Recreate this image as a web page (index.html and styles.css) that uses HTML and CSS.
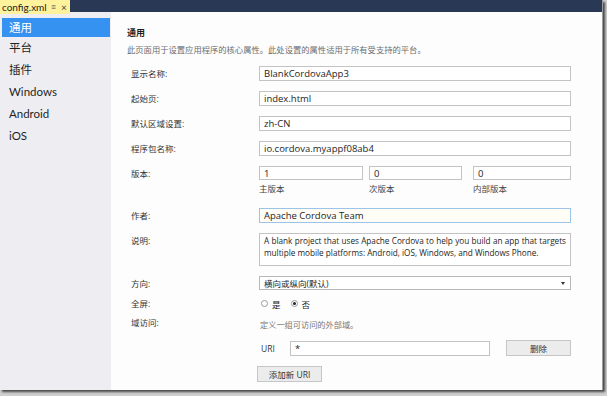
FILE: index.html
```html
<!DOCTYPE html>
<html lang="zh">
<head>
    <meta charset="UTF-8">
    <title>config.xml</title>
    <link rel="stylesheet" href="styles.css">
</head>
<body>
    <div class="window">
        <div class="tabbar">
            <div class="tab">
                <span class="tab-name">config.xml</span>
                <span class="tab-pin">≡</span>
                <span class="tab-close">×</span>
            </div>
        </div>

        <div class="body">
            <ul class="sidebar">
                <li class="active">通用</li>
                <li>平台</li>
                <li>插件</li>
                <li>Windows</li>
                <li>Android</li>
                <li>iOS</li>
            </ul>

            <div class="main">
                <h2>通用</h2>
                <p class="description">此页面用于设置应用程序的核心属性。此处设置的属性适用于所有受支持的平台。</p>

                <div class="form">
                    <div class="row">
                        <label>显示名称:</label>
                        <input type="text" class="field" value="BlankCordovaApp3">
                    </div>
                    <div class="row">
                        <label>起始页:</label>
                        <input type="text" class="field" value="index.html">
                    </div>
                    <div class="row">
                        <label>默认区域设置:</label>
                        <input type="text" class="field" value="zh-CN">
                    </div>
                    <div class="row">
                        <label>程序包名称:</label>
                        <input type="text" class="field" value="io.cordova.myappf08ab4">
                    </div>
                    <div class="row row-version">
                        <label>版本:</label>
                        <div class="version">
                            <div class="version-part major">
                                <input type="text" class="field" value="1">
                                <span>主版本</span>
                            </div>
                            <div class="version-part minor">
                                <input type="text" class="field" value="0">
                                <span>次版本</span>
                            </div>
                            <div class="version-part build">
                                <input type="text" class="field" value="0">
                                <span>内部版本</span>
                            </div>
                        </div>
                    </div>
                    <div class="row">
                        <label>作者:</label>
                        <input type="text" class="field focused" value="Apache Cordova Team">
                    </div>
                    <div class="row">
                        <label>说明:</label>
                        <div class="field textarea">A blank project that uses Apache Cordova to help you build an app that targets multiple mobile platforms: Android, iOS, Windows, and Windows Phone.</div>
                    </div>
                    <div class="row row-select">
                        <label>方向:</label>
                        <div class="field select">
                            <span>横向或纵向(默认)</span>
                            <span class="arrow"></span>
                        </div>
                    </div>
                    <div class="row row-radio">
                        <label>全屏:</label>
                        <div class="radios">
                            <span class="radio"></span><span class="radio-text">是</span>
                            <span class="radio checked"></span><span class="radio-text">否</span>
                        </div>
                    </div>
                    <div class="row row-access">
                        <label>域访问:</label>
                        <div class="access">
                            <p class="hint">定义一组可访问的外部域。</p>
                            <div class="uri-row">
                                <span class="uri-label">URI</span>
                                <input type="text" class="field uri" value="*">
                                <button class="btn delete">删除</button>
                            </div>
                            <button class="btn add">添加新 URI</button>
                        </div>
                    </div>
                </div>
            </div>
        </div>
    </div>
</body>
</html>
```

FILE: styles.css
```css
body {
    margin: 0;
    width: 607px;
    height: 396px;
    background-color: #cfcfcf;
    font-family: "Open Sans", "Noto Sans CJK SC", sans-serif;
    color: #1e1e1e;
    overflow: hidden;
}

.window {
    width: 603px;
    height: 390px;
    background-color: #fff;
    border-right: 1px solid #9a9a9a;
    box-shadow: 2px 2px 2px #4a4a4a;
    box-sizing: border-box;
    display: flex;
    flex-direction: column;
    overflow: hidden;
}

/* 顶部标签栏 */
.tabbar {
    height: 12px;
    background-color: #293955;
    position: relative;
    flex-shrink: 0;
}

.tab {
    position: absolute;
    left: 0;
    top: 0;
    width: 70px;
    height: 14px;
    background-color: #fff29d;
    display: flex;
    align-items: center;
    font-family: Lato, "Noto Sans CJK SC", sans-serif;
    font-size: 10px;
    line-height: 14px;
    z-index: 1;
    overflow: hidden;
}

.tab-name {
    margin-left: 2px;
}

.tab-pin {
    margin-left: 4px;
    font-size: 9px;
    color: #444;
}

.tab-close {
    margin-left: 5px;
    font-size: 10px;
    color: #444;
}

.body {
    flex: 1;
    display: flex;
    min-height: 0;
    overflow: hidden;
}

/* 左侧导航 */
.sidebar {
    width: 111px;
    margin: 0;
    padding: 6px 0 0 0;
    list-style: none;
    background-color: #eeeef2;
    font-family: Lato, "Noto Sans CJK SC", sans-serif;
    font-size: 11.5px;
    flex-shrink: 0;
}

.sidebar li {
    height: 22px;
    line-height: 22px;
    padding-left: 9px;
    color: #1e1e1e;
}

.sidebar li.active {
    height: 19px;
    line-height: 19px;
    margin-left: 2px;
    margin-right: 1px;
    padding-left: 7px;
    background-color: #3592f0;
    color: #fff;
}

/* 主区域 */
.main {
    flex: 1;
    padding: 15px 0 0 16px;
    background-color: #fdfdfd;
}

.main h2 {
    margin: 0;
    font-size: 9px;
    font-weight: bold;
    line-height: 12px;
}

.description {
    margin: 5px 0 0 0;
    font-size: 8.3px;
    line-height: 12px;
    color: #6d6d6d;
}

.form {
    margin-top: 10px;
    padding-left: 4px;
}

.row {
    display: flex;
    align-items: flex-start;
    margin-bottom: 10px;
}

.row label {
    width: 128px;
    flex-shrink: 0;
    font-size: 8.5px;
    line-height: 15px;
    color: #333;
}

.field {
    width: 312px;
    height: 15px;
    box-sizing: border-box;
    margin: 0;
    padding: 0 4px;
    border: 1px solid #c3c3c3;
    background-color: #fff;
    font-family: "Open Sans", "Noto Sans CJK SC", sans-serif;
    font-size: 9.5px;
    color: #1e1e1e;
    outline: none;
}

.field.focused {
    border-color: #9cc3e8;
    background-color: #fffdf5;
}

/* 版本 */
.version {
    display: flex;
}

.version-part {
    display: flex;
    flex-direction: column;
}

.version-part .field {
    height: 14px;
}

.version-part span {
    margin-top: 3px;
    font-size: 8.5px;
    line-height: 12px;
    color: #444;
}

.major .field { width: 104px; margin-right: 6px; }
.minor .field { width: 93px; margin-right: 11px; }
.build .field { width: 98px; }

.row-version {
    margin-bottom: 13px;
}

/* 说明 */
.textarea {
    height: 33px;
    padding: 1px 4px;
    font-size: 8.2px;
    line-height: 12px;
    text-align: justify;
}

.row-select {
    margin-bottom: 5px;
}

.select {
    height: 14px;
    display: flex;
    align-items: center;
    justify-content: space-between;
    font-size: 8.5px;
    border-color: #b8b8b8;
}

.arrow {
    width: 0;
    height: 0;
    border-left: 2px solid transparent;
    border-right: 2px solid transparent;
    border-top: 3px solid #333;
    margin-right: 1px;
}

/* 单选 */
.row-radio {
    margin-bottom: 4px;
}

.radios {
    display: flex;
    align-items: center;
    height: 15px;
    padding-left: 2px;
    font-size: 8.5px;
}

.radio {
    width: 7px;
    height: 7px;
    border: 1px solid #9a9a9a;
    border-radius: 50%;
    background-color: #fff;
    box-sizing: border-box;
    position: relative;
}

.radio.checked::after {
    content: "";
    position: absolute;
    left: 1px;
    top: 1px;
    width: 3px;
    height: 3px;
    border-radius: 50%;
    background-color: #222;
}

.radio-text {
    margin-left: 4px;
    margin-right: 10px;
}

/* 域访问 */
.access {
    display: flex;
    flex-direction: column;
    align-items: flex-start;
}

.hint {
    margin: 0;
    padding-top: 2px;
    padding-left: 1px;
    font-size: 8.2px;
    line-height: 15px;
    color: #777;
}

.uri-row {
    display: flex;
    align-items: center;
    margin-top: 8px;
    padding-left: 2px;
}

.uri-label {
    width: 29px;
    font-size: 8.5px;
    color: #333;
}

.field.uri {
    width: 200px;
    height: 15px;
}

.btn {
    height: 16px;
    box-sizing: border-box;
    padding: 0;
    border: 1px solid #c6c6c6;
    background-color: #ececec;
    font-family: "Open Sans", "Noto Sans CJK SC", sans-serif;
    font-size: 8.5px;
    color: #333;
}

.btn.delete {
    width: 65px;
    margin-left: 16px;
}

.btn.add {
    width: 65px;
    margin-top: 10px;
    margin-left: -2px;
}
```
